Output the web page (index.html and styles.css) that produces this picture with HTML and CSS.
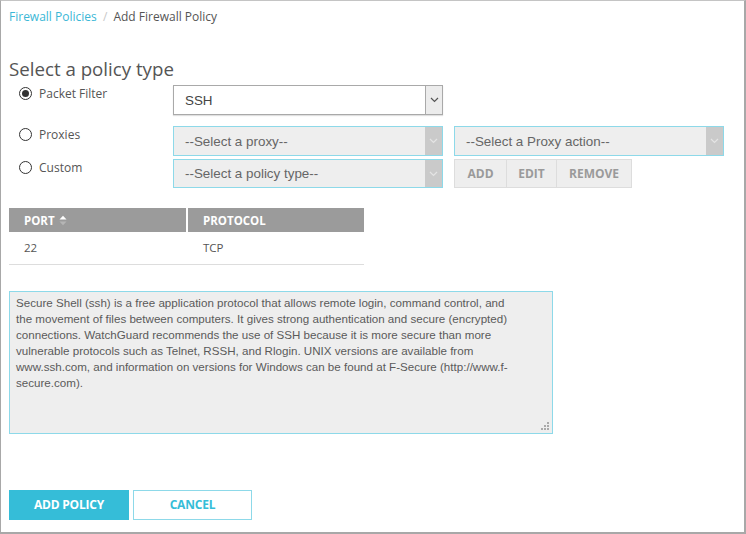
FILE: index.html
```html
<!DOCTYPE html>
<html>
<head>
<meta charset="utf-8">
<link rel="stylesheet" href="styles.css">
</head>
<body>
<div class="frame">
  <nav class="crumbs">
    <a class="crumb-link">Firewall Policies</a>
    <span class="crumb-sep">/</span>
    <span class="crumb-current">Add Firewall Policy</span>
  </nav>

  <h2 class="title">Select a policy type</h2>

  <div class="type-grid">
    <label class="radio-row r1">
      <span class="radio checked"></span>
      <span class="radio-label">Packet Filter</span>
    </label>
    <div class="select sel-active r1c2">
      <span class="sel-text">SSH</span>
      <span class="sel-arrow"><svg width="9" height="6" viewBox="0 0 9 6"><path d="M1 1 L4.5 4.5 L8 1" fill="none" stroke="#555" stroke-width="1.2"/></svg></span>
    </div>

    <label class="radio-row r2">
      <span class="radio"></span>
      <span class="radio-label">Proxies</span>
    </label>
    <div class="select sel-disabled">
      <span class="sel-text">--Select a proxy--</span>
      <span class="sel-arrow"><svg width="9" height="6" viewBox="0 0 9 6"><path d="M1 1 L4.5 4.5 L8 1" fill="none" stroke="#e4e4e4" stroke-width="1.2"/></svg></span>
    </div>
    <div class="select sel-disabled">
      <span class="sel-text">--Select a Proxy action--</span>
      <span class="sel-arrow"><svg width="9" height="6" viewBox="0 0 9 6"><path d="M1 1 L4.5 4.5 L8 1" fill="none" stroke="#e4e4e4" stroke-width="1.2"/></svg></span>
    </div>

    <label class="radio-row r3">
      <span class="radio"></span>
      <span class="radio-label">Custom</span>
    </label>
    <div class="select sel-disabled sel-short">
      <span class="sel-text">--Select a policy type--</span>
      <span class="sel-arrow"><svg width="9" height="6" viewBox="0 0 9 6"><path d="M1 1 L4.5 4.5 L8 1" fill="none" stroke="#e4e4e4" stroke-width="1.2"/></svg></span>
    </div>
    <div class="btn-group">
      <span class="gbtn">ADD</span>
      <span class="gbtn">EDIT</span>
      <span class="gbtn">REMOVE</span>
    </div>
  </div>

  <table class="ports">
    <thead>
      <tr>
        <th class="col-port">PORT <svg class="sort" width="8" height="11" viewBox="0 0 8 11"><path d="M0.5 4.5 L4 0.8 L7.5 4.5 Z" fill="#fff"/><path d="M0.5 6.5 L4 10.2 L7.5 6.5 Z" fill="#b5b5b5"/></svg></th>
        <th class="col-proto">PROTOCOL</th>
      </tr>
    </thead>
    <tbody>
      <tr>
        <td class="col-port">22</td>
        <td class="col-proto">TCP</td>
      </tr>
    </tbody>
  </table>

  <div class="desc">Secure Shell (ssh) is a free application protocol that allows remote login, command control, and the movement of files between computers. It gives strong authentication and secure (encrypted) connections. WatchGuard recommends the use of SSH because it is more secure than more vulnerable protocols such as Telnet, RSSH, and Rlogin. UNIX versions are available from www.ssh.com, and information on versions for Windows can be found at F-Secure (http://www.f-secure.com).<svg class="grip" width="8" height="8" viewBox="0 0 8 8"><rect x="6" y="0" width="2" height="2" fill="#aaa"/><rect x="3" y="3" width="2" height="2" fill="#aaa"/><rect x="6" y="3" width="2" height="2" fill="#aaa"/><rect x="0" y="6" width="2" height="2" fill="#aaa"/><rect x="3" y="6" width="2" height="2" fill="#aaa"/><rect x="6" y="6" width="2" height="2" fill="#aaa"/></svg></div>

  <div class="actions">
    <span class="btn btn-primary">ADD POLICY</span>
    <span class="btn btn-outline">CANCEL</span>
  </div>
</div>
</body>
</html>
```

FILE: styles.css
```css
* { box-sizing: border-box; }
html, body { margin: 0; padding: 0; background: #fff; }
body { font-family: "Open Sans", "DejaVu Sans", sans-serif; color: #555; }

.frame {
  width: 746px;
  height: 534px;
  border-top: 1px solid #c4c4c4;
  border-left: 1px solid #a8a8a8;
  border-right: 2px solid #a8a8a8;
  border-bottom: 2px solid #a8a8a8;
  padding: 0 0 0 8px;
}

.crumbs {
  font-size: 12px;
  height: 30px;
  padding-top: 7px;
  line-height: 17px;
}
.crumb-link { color: #3bb7d6; }
.crumb-sep { color: #c8c8c8; margin: 0 3px 0 3px; }
.crumb-current { color: #555; }

.title {
  margin: 27px 0 0 0;
  font-size: 18.7px;
  font-weight: 400;
  line-height: 22px;
  color: #555;
}

.type-grid {
  display: grid;
  grid-template-columns: 153px 270px 270px;
  column-gap: 11px;
  grid-template-rows: 30px 41px 33px;
  margin-top: 5px;
  width: 730px;
}
.type-grid > :nth-child(2) { grid-column: 2 / 4; width: 270px; }
.type-grid > :nth-child(3),
.type-grid > :nth-child(4),
.type-grid > :nth-child(5) { margin-top: 11px; }
.type-grid > :nth-child(6),
.type-grid > :nth-child(7),
.type-grid > :nth-child(8) { margin-top: 3px; }

.radio-row {
  display: flex;
  align-items: center;
  height: 16px;
  padding-left: 10px;
  font-size: 12px;
}
.radio {
  width: 13px;
  height: 13px;
  border: 1px solid #333;
  border-radius: 50%;
  background: #fff;
  display: inline-block;
  position: relative;
  margin-right: 7px;
}
.radio.checked::after {
  content: "";
  position: absolute;
  left: 2px; top: 2px;
  width: 7px; height: 7px;
  border-radius: 50%;
  background: #333;
}
.radio-label { color: #555; }

.select {
  height: 30px;
  display: flex;
  align-items: stretch;
  font-family: "Liberation Sans", Arial, sans-serif;
  font-size: 13.4px;
}
.sel-text { flex: 1; padding-left: 11px; display: flex; align-items: center; }
.sel-arrow {
  width: 17px;
  display: flex; align-items: center; justify-content: center;
}
.sel-active {
  background: #fff;
  border: 1px solid #a9a9a9;
  box-shadow: 0 1px 1px rgba(0,0,0,0.12);
  color: #444;
}
.sel-active .sel-arrow {
  background: #ececec;
  border-left: 1px solid #a9a9a9;
}
.sel-disabled {
  background: #eee;
  border: 1px solid #8dd9e9;
  color: #666;
}
.sel-disabled .sel-arrow { background: #cacaca; }
.sel-short { height: 29px; }

.btn-group {
  display: flex;
  height: 29px;
}
.gbtn {
  background: #eee;
  border: 1px solid #ddd;
  color: #9a9a9a;
  font-weight: 700;
  font-size: 12px;
  display: flex; align-items: center; justify-content: center;
}
.gbtn:nth-child(1) { width: 53px; }
.gbtn:nth-child(2) { width: 50px; border-left: none; }
.gbtn:nth-child(3) { width: 75px; border-left: none; }

.ports {
  margin-top: 19px;
  border-collapse: collapse;
  width: 355px;
  font-size: 11.5px;
}
.ports th {
  background: #9b9b9b;
  color: #fff;
  font-weight: 700;
  text-align: left;
  height: 24px;
  padding: 0 0 0 15px;
}
.ports th.col-port { width: 178px; border-right: 2px solid #fff; }
.ports th.col-proto { padding-left: 15px; }
.sort { vertical-align: -1px; margin-left: 1px; }
.ports td {
  height: 32px;
  padding: 0 0 0 15px;
  border-bottom: 1px solid #ddd;
  color: #555;
}
.ports td.col-proto { padding-left: 16px; }

.desc {
  margin-top: 26px;
  width: 544px;
  height: 143px;
  background: #eee;
  border: 1px solid #8dd9e9;
  padding: 3px 39px 0 6px;
  font-family: "Liberation Sans", Arial, sans-serif;
  font-size: 11.6px;
  line-height: 16px;
  color: #5a5a5a;
  position: relative;
}
.grip { position: absolute; right: 3px; bottom: 3px; }

.actions {
  margin-top: 56px;
  display: flex;
  gap: 4px;
}
.btn {
  height: 30px;
  display: flex; align-items: center; justify-content: center;
  font-weight: 700;
  font-size: 12px;
  letter-spacing: -0.2px;
}
.btn-primary { width: 120px; background: #35bdd8; color: #fff; }
.btn-outline { width: 119px; background: #fff; border: 1px solid #8dd9e9; color: #35bdd8; }
```
